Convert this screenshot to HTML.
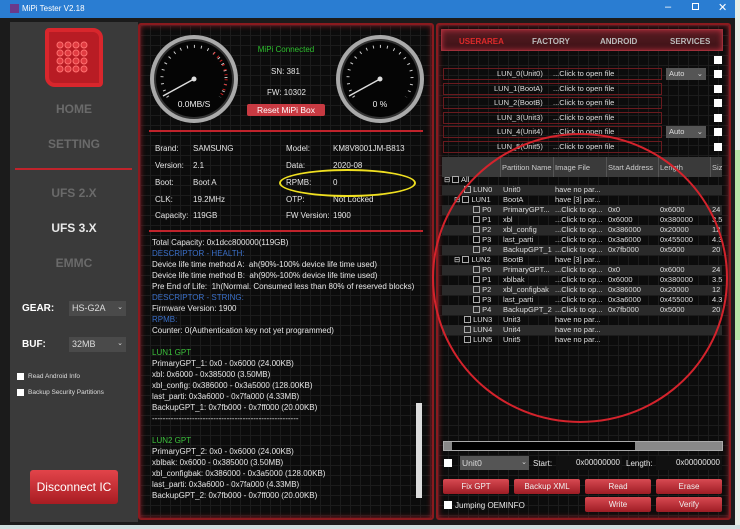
<!DOCTYPE html>
<html><head><meta charset="utf-8"><style>
*{margin:0;padding:0;box-sizing:border-box}
body{width:740px;height:529px;overflow:hidden;background:#1f6f86;font-family:"Liberation Sans",sans-serif;position:relative}
.a{position:absolute}
.win{left:0;top:0;width:735px;height:525px;background:#1b1b1b}
.tb{left:0;top:0;width:735px;height:18px;background:#2a7dd2;color:#fff;font-size:8px}
.left{left:10px;top:22px;width:128px;height:500px;background:#3a3a3a}
.nav{width:128px;text-align:center;font-weight:bold;font-size:12px;color:#6a6a6a;left:10px}
.panel{background:#0c0c0c;border:2px solid #8a1a1e;border-radius:3px;box-shadow:inset 0 0 6px #a0202a;
background-image:linear-gradient(#1c1c1c 1px,transparent 1px),linear-gradient(90deg,#1c1c1c 1px,transparent 1px);background-size:10px 10px}
.w{color:#e6e6e6;font-size:8px;white-space:nowrap}
.rl{height:2px;background:#c0232b}
.log{left:152px;font-size:8px;color:#e6e6e6;line-height:11px;white-space:pre}
.bl{color:#3a6fc8}.gr{color:#3cc03c}
.lun{left:443px;width:219px;height:12px;border:1px solid #6a1a1e;font-size:7.5px;color:#ddd;line-height:10px}
.cb{width:8px;height:8px;background:#fff}
.btn{height:15px;background:linear-gradient(#d84a52,#9e1c24);color:#f0f0f0;font-size:8px;text-align:center;line-height:15px;border-radius:2px}
.tr{left:442px;width:280px;height:10px;font-size:7.5px;color:#ddd;line-height:10px;white-space:nowrap}
.tr span{position:absolute;top:0;height:10px}
.sc{width:7px;height:7px;border:1px solid #aaa;display:inline-block;vertical-align:-1px}
</style></head><body>
<div class="a" style="left:735px;top:0;width:5px;height:529px;background:#e8f0e8"></div>
<div class="a" style="left:735px;top:150px;width:5px;height:190px;background:#b8e6a8"></div>
<div class="a win"></div>
<div class="a tb"><div class="a" style="left:10px;top:4px;width:9px;height:9px;background:#6a3a8a"></div><span class="a" style="left:22px;top:4px">MiPi Tester V2.18</span>
<span class="a" style="left:665px;top:1px;font-size:11px">–</span><span class="a" style="left:692px;top:3px;width:7px;height:7px;border:1px solid #fff"></span><span class="a" style="left:718px;top:1px;font-size:11px">✕</span></div>
<div class="a left"></div>
<div class="a" style="left:45px;top:28px;width:58px;height:59px;border:4px solid #d8262c;border-radius:4px 10px 4px 10px;background:#b81c24"></div>
<svg class="a" style="left:55px;top:40px" width="36" height="36"><g fill="#e03a40" stroke="#ff7070" stroke-width="1">
<circle cx="5" cy="5" r="3"/><circle cx="13" cy="5" r="3"/><circle cx="21" cy="5" r="3"/><circle cx="29" cy="5" r="3"/>
<circle cx="5" cy="13" r="3"/><circle cx="13" cy="13" r="3"/><circle cx="21" cy="13" r="3"/><circle cx="29" cy="13" r="3"/>
<circle cx="5" cy="21" r="3"/><circle cx="13" cy="21" r="3"/><circle cx="21" cy="21" r="3"/><circle cx="29" cy="21" r="3"/>
<circle cx="5" cy="29" r="3"/><circle cx="13" cy="29" r="3"/><circle cx="21" cy="29" r="3"/><circle cx="29" cy="29" r="3"/></g></svg>
<div class="a nav" style="top:102px">HOME</div>
<div class="a nav" style="top:137px">SETTING</div>
<div class="a rl" style="left:15px;top:168px;width:117px"></div>
<div class="a nav" style="top:186px">UFS 2.X</div>
<div class="a nav" style="top:221px;color:#e8e8e8">UFS 3.X</div>
<div class="a nav" style="top:256px">EMMC</div>
<div class="a" style="left:22px;top:303px;font-size:10px;font-weight:bold;color:#fff">GEAR:</div>
<div class="a" style="left:69px;top:301px;width:57px;height:15px;background:#4a4a4a;color:#ddd;font-size:9px;padding:2px 3px">HS-G2A<span style="float:right;font-size:7px">⌄</span></div>
<div class="a" style="left:22px;top:339px;font-size:10px;font-weight:bold;color:#fff">BUF:</div>
<div class="a" style="left:69px;top:337px;width:57px;height:15px;background:#4a4a4a;color:#ddd;font-size:9px;padding:2px 3px">32MB<span style="float:right;font-size:7px">⌄</span></div>
<div class="a cb" style="left:17px;top:373px;width:7px;height:7px"></div><div class="a" style="left:28px;top:373px;font-size:6.5px;color:#ddd">Read Android Info</div>
<div class="a cb" style="left:17px;top:389px;width:7px;height:7px"></div><div class="a" style="left:28px;top:389px;font-size:6.5px;color:#ddd">Backup Security Partitions</div>
<div class="a" style="left:30px;top:470px;width:88px;height:34px;background:linear-gradient(#e2444a,#a81c22);border-radius:3px;color:#fff;font-size:12px;text-align:center;line-height:34px">Disconnect IC</div>

<div class="a panel" style="left:138px;top:23px;width:296px;height:497px"></div>
<svg class="a" style="left:148px;top:33px" width="92" height="92"><circle cx="46" cy="46" r="44" fill="#aaa"/><circle cx="46" cy="46" r="40" fill="#333"/><circle cx="46" cy="46" r="38" fill="#050505"/>
<path d="M20 64 A32 32 0 1 1 72 64" fill="none" stroke="#ccc" stroke-width="3" stroke-dasharray="1 6"/><path d="M66 20 A32 32 0 0 1 72 64" fill="none" stroke="#d02020" stroke-width="3" stroke-dasharray="1 4"/>
<line x1="46" y1="46" x2="15" y2="63" stroke="#ddd" stroke-width="1.5"/><circle cx="46" cy="46" r="2.5" fill="#ddd"/>
<text x="46" y="74" fill="#eee" font-size="8.5" text-anchor="middle" font-family="Liberation Sans">0.0MB/S</text></svg>
<svg class="a" style="left:334px;top:33px" width="92" height="92"><circle cx="46" cy="46" r="44" fill="#aaa"/><circle cx="46" cy="46" r="40" fill="#333"/><circle cx="46" cy="46" r="38" fill="#050505"/>
<path d="M20 64 A32 32 0 1 1 72 64" fill="none" stroke="#ccc" stroke-width="3" stroke-dasharray="1 6"/>
<line x1="46" y1="46" x2="15" y2="63" stroke="#ddd" stroke-width="1.5"/><circle cx="46" cy="46" r="2.5" fill="#ddd"/>
<text x="46" y="74" fill="#eee" font-size="8.5" text-anchor="middle" font-family="Liberation Sans">0 %</text></svg>
<div class="a" style="left:246px;top:45px;width:80px;text-align:center;font-size:8px;color:#2ec02e;white-space:nowrap">MiPi Connected</div>
<div class="a w" style="left:271px;top:67px">SN: 381</div>
<div class="a w" style="left:267px;top:88px">FW: 10302</div>
<div class="a" style="left:247px;top:104px;width:78px;height:12px;background:#c83a42;border-radius:2px;color:#fff;font-size:8.5px;text-align:center;line-height:12px">Reset MiPi Box</div>
<div class="a rl" style="left:149px;top:130px;width:274px"></div>
<div class="a w" style="left:155px;top:144px">Brand:</div><div class="a w" style="left:193px;top:144px">SAMSUNG</div>
<div class="a w" style="left:286px;top:144px">Model:</div><div class="a w" style="left:333px;top:144px">KM8V8001JM-B813</div>
<div class="a w" style="left:155px;top:161px">Version:</div><div class="a w" style="left:193px;top:161px">2.1</div>
<div class="a w" style="left:286px;top:161px">Data:</div><div class="a w" style="left:333px;top:161px">2020-08</div>
<div class="a w" style="left:155px;top:178px">Boot:</div><div class="a w" style="left:193px;top:178px">Boot A</div>
<div class="a w" style="left:286px;top:178px">RPMB:</div><div class="a w" style="left:333px;top:178px">0</div>
<div class="a w" style="left:155px;top:195px">CLK:</div><div class="a w" style="left:193px;top:195px">19.2MHz</div>
<div class="a w" style="left:286px;top:195px">OTP:</div><div class="a w" style="left:333px;top:195px">Not Locked</div>
<div class="a w" style="left:155px;top:211px">Capacity:</div><div class="a w" style="left:193px;top:211px">119GB</div>
<div class="a w" style="left:286px;top:211px">FW Version:</div><div class="a w" style="left:333px;top:211px">1900</div>
<div class="a" style="left:279px;top:169px;width:137px;height:28px;border:2px solid #f0e020;border-radius:50%"></div>
<div class="a rl" style="left:149px;top:230px;width:274px"></div>
<div class="a log" style="top:237px">Total Capacity: 0x1dcc800000(119GB)
<span class="bl">DESCRIPTOR - HEALTH:</span>
Device life time method A:  ah(90%-100% device life time used)
Device life time method B:  ah(90%-100% device life time used)
Pre End of Life:  1h(Normal. Consumed less than 80% of reserved blocks)
<span class="bl">DESCRIPTOR - STRING:</span>
Firmware Version: 1900
<span class="bl">RPMB:</span>
Counter: 0(Authentication key not yet programmed)

<span class="gr">LUN1 GPT</span>
PrimaryGPT_1: 0x0 - 0x6000 (24.00KB)
xbl: 0x6000 - 0x385000 (3.50MB)
xbl_config: 0x386000 - 0x3a5000 (128.00KB)
last_parti: 0x3a6000 - 0x7fa000 (4.33MB)
BackupGPT_1: 0x7fb000 - 0x7ff000 (20.00KB)
-------------------------------------------------------

<span class="gr">LUN2 GPT</span>
PrimaryGPT_2: 0x0 - 0x6000 (24.00KB)
xblbak: 0x6000 - 0x385000 (3.50MB)
xbl_configbak: 0x386000 - 0x3a5000 (128.00KB)
last_parti: 0x3a6000 - 0x7fa000 (4.33MB)
BackupGPT_2: 0x7fb000 - 0x7ff000 (20.00KB)</div>
<div class="a" style="left:416px;top:403px;width:6px;height:95px;background:#ddd"></div>

<div class="a panel" style="left:436px;top:23px;width:295px;height:497px"></div>
<div class="a" style="left:441px;top:29px;width:282px;height:22px;border:1px solid #a0303a;background:linear-gradient(#5a1c22,#3a1216);box-shadow:inset 0 0 6px #c03040;font-size:8px;font-weight:bold;color:#bbb">
<span class="a" style="left:17px;top:7px;color:#e02a2a">USERAREA</span><span class="a" style="left:90px;top:7px">FACTORY</span><span class="a" style="left:158px;top:7px">ANDROID</span><span class="a" style="left:228px;top:7px">SERVICES</span></div>
<div class="a cb" style="left:714px;top:56px"></div>
<div class="a lun" style="top:68px"><span class="a" style="left:53px">LUN_0(Unit0)</span><span class="a" style="left:109px">...Click to open file</span></div>
<div class="a lun" style="top:83px"><span class="a" style="left:50px">LUN_1(BootA)</span><span class="a" style="left:109px">...Click to open file</span></div>
<div class="a lun" style="top:97px"><span class="a" style="left:50px">LUN_2(BootB)</span><span class="a" style="left:109px">...Click to open file</span></div>
<div class="a lun" style="top:112px"><span class="a" style="left:53px">LUN_3(Unit3)</span><span class="a" style="left:109px">...Click to open file</span></div>
<div class="a lun" style="top:126px"><span class="a" style="left:53px">LUN_4(Unit4)</span><span class="a" style="left:109px">...Click to open file</span></div>
<div class="a lun" style="top:141px"><span class="a" style="left:53px">LUN_5(Unit5)</span><span class="a" style="left:109px">...Click to open file</span></div>
<div class="a" style="left:666px;top:68px;width:40px;height:12px;background:#555;color:#ddd;font-size:7.5px;padding:1px 3px">Auto<span style="float:right">⌄</span></div>
<div class="a" style="left:666px;top:126px;width:40px;height:12px;background:#555;color:#ddd;font-size:7.5px;padding:1px 3px">Auto<span style="float:right">⌄</span></div>
<div class="a cb" style="left:714px;top:70px"></div><div class="a cb" style="left:714px;top:85px"></div><div class="a cb" style="left:714px;top:99px"></div><div class="a cb" style="left:714px;top:114px"></div><div class="a cb" style="left:714px;top:128px"></div><div class="a cb" style="left:714px;top:143px"></div>
<div class="a" style="left:442px;top:157px;width:280px;height:20px;background:#3a3a3a;font-size:7.5px;color:#ccc">
<span class="a" style="left:60px;top:6px">Partition Name</span><span class="a" style="left:113px;top:6px">Image File</span><span class="a" style="left:166px;top:6px">Start Address</span><span class="a" style="left:218px;top:6px">Length</span><span class="a" style="left:270px;top:6px">Siz</span>
<div class="a" style="left:58px;top:0;width:1px;height:20px;background:#555"></div><div class="a" style="left:111px;top:0;width:1px;height:20px;background:#555"></div><div class="a" style="left:164px;top:0;width:1px;height:20px;background:#555"></div><div class="a" style="left:216px;top:0;width:1px;height:20px;background:#555"></div><div class="a" style="left:268px;top:0;width:1px;height:20px;background:#555"></div></div>
<div class="a tr" style="top:175px"><span style="left:2px">⊟ <i class="sc"></i> All</span></div>
<div class="a tr" style="top:185px;background:#2a2a2a"><span style="left:22px"><i class="sc"></i> LUN0</span><span style="left:61px">Unit0</span><span style="left:113px">have no par...</span></div>
<div class="a tr" style="top:195px"><span style="left:12px">⊟ <i class="sc"></i> LUN1</span><span style="left:61px">BootA</span><span style="left:113px">have [3] par...</span></div>
<div class="a tr" style="top:205px;background:#2a2a2a"><span style="left:31px"><i class="sc"></i> P0</span><span style="left:61px">PrimaryGPT...</span><span style="left:113px">...Click to op...</span><span style="left:166px">0x0</span><span style="left:218px">0x6000</span><span style="left:270px">24</span></div>
<div class="a tr" style="top:215px"><span style="left:31px"><i class="sc"></i> P1</span><span style="left:61px">xbl</span><span style="left:113px">...Click to op...</span><span style="left:166px">0x6000</span><span style="left:218px">0x380000</span><span style="left:270px">3.5</span></div>
<div class="a tr" style="top:225px;background:#2a2a2a"><span style="left:31px"><i class="sc"></i> P2</span><span style="left:61px">xbl_config</span><span style="left:113px">...Click to op...</span><span style="left:166px">0x386000</span><span style="left:218px">0x20000</span><span style="left:270px">12</span></div>
<div class="a tr" style="top:235px"><span style="left:31px"><i class="sc"></i> P3</span><span style="left:61px">last_parti</span><span style="left:113px">...Click to op...</span><span style="left:166px">0x3a6000</span><span style="left:218px">0x455000</span><span style="left:270px">4.3</span></div>
<div class="a tr" style="top:245px;background:#2a2a2a"><span style="left:31px"><i class="sc"></i> P4</span><span style="left:61px">BackupGPT_1</span><span style="left:113px">...Click to op...</span><span style="left:166px">0x7fb000</span><span style="left:218px">0x5000</span><span style="left:270px">20</span></div>
<div class="a tr" style="top:255px"><span style="left:12px">⊟ <i class="sc"></i> LUN2</span><span style="left:61px">BootB</span><span style="left:113px">have [3] par...</span></div>
<div class="a tr" style="top:265px;background:#2a2a2a"><span style="left:31px"><i class="sc"></i> P0</span><span style="left:61px">PrimaryGPT...</span><span style="left:113px">...Click to op...</span><span style="left:166px">0x0</span><span style="left:218px">0x6000</span><span style="left:270px">24</span></div>
<div class="a tr" style="top:275px"><span style="left:31px"><i class="sc"></i> P1</span><span style="left:61px">xblbak</span><span style="left:113px">...Click to op...</span><span style="left:166px">0x6000</span><span style="left:218px">0x380000</span><span style="left:270px">3.5</span></div>
<div class="a tr" style="top:285px;background:#2a2a2a"><span style="left:31px"><i class="sc"></i> P2</span><span style="left:61px">xbl_configbak</span><span style="left:113px">...Click to op...</span><span style="left:166px">0x386000</span><span style="left:218px">0x20000</span><span style="left:270px">12</span></div>
<div class="a tr" style="top:295px"><span style="left:31px"><i class="sc"></i> P3</span><span style="left:61px">last_parti</span><span style="left:113px">...Click to op...</span><span style="left:166px">0x3a6000</span><span style="left:218px">0x455000</span><span style="left:270px">4.3</span></div>
<div class="a tr" style="top:305px;background:#2a2a2a"><span style="left:31px"><i class="sc"></i> P4</span><span style="left:61px">BackupGPT_2</span><span style="left:113px">...Click to op...</span><span style="left:166px">0x7fb000</span><span style="left:218px">0x5000</span><span style="left:270px">20</span></div>
<div class="a tr" style="top:315px"><span style="left:22px"><i class="sc"></i> LUN3</span><span style="left:61px">Unit3</span><span style="left:113px">have no par...</span></div>
<div class="a tr" style="top:325px;background:#2a2a2a"><span style="left:22px"><i class="sc"></i> LUN4</span><span style="left:61px">Unit4</span><span style="left:113px">have no par...</span></div>
<div class="a tr" style="top:335px"><span style="left:22px"><i class="sc"></i> LUN5</span><span style="left:61px">Unit5</span><span style="left:113px">have no par...</span></div>
<div class="a" style="left:443px;top:441px;width:280px;height:10px;background:#888;border:1px solid #aaa"></div>
<div class="a" style="left:452px;top:442px;width:183px;height:8px;background:#000"></div>
<div class="a cb" style="left:444px;top:459px"></div>
<div class="a" style="left:460px;top:456px;width:69px;height:14px;background:#555;color:#ddd;font-size:8.5px;padding:2px 2px">Unit0<span style="float:right;font-size:7px">⌄</span></div>
<div class="a w" style="left:533px;top:459px">Start:</div>
<div class="a w" style="left:556px;top:456px;width:66px;height:14px;background:#111;text-align:right;padding:2px 2px">0x00000000</div>
<div class="a w" style="left:626px;top:459px">Length:</div>
<div class="a w" style="left:656px;top:456px;width:66px;height:14px;background:#111;text-align:right;padding:2px 2px">0x00000000</div>
<div class="a btn" style="left:443px;top:479px;width:66px">Fix GPT</div>
<div class="a btn" style="left:514px;top:479px;width:66px">Backup XML</div>
<div class="a btn" style="left:585px;top:479px;width:66px">Read</div>
<div class="a btn" style="left:656px;top:479px;width:66px">Erase</div>
<div class="a btn" style="left:585px;top:497px;width:66px">Write</div>
<div class="a btn" style="left:656px;top:497px;width:66px">Verify</div>
<div class="a cb" style="left:444px;top:501px"></div><div class="a w" style="left:455px;top:501px">Jumping OEMINFO</div>
<div class="a" style="left:432px;top:133px;width:296px;height:290px;border:2.5px solid #d4232c;border-radius:50%"></div>
<div class="a" style="left:0;top:525px;width:740px;height:4px;background:#d0e0e0"></div>
</body></html>
